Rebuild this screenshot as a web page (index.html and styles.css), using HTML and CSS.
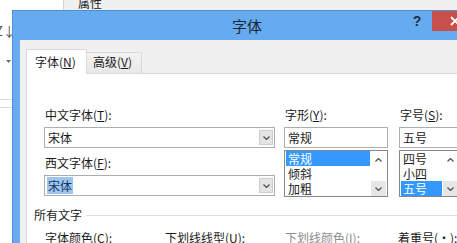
FILE: index.html
```html
<!DOCTYPE html>
<html lang="zh-CN">
<head>
  <meta charset="UTF-8">
  <title>字体</title>
  <link rel="stylesheet" href="styles.css">
</head>
<body>

  <!-- strip of the window behind -->
  <div class="topbar">
    <div class="topbar-left"></div>
    <div class="topbar-right"><span class="prop-title">属性</span></div>
  </div>

  <div class="screen">
    <div class="side">
      <span class="sort-glyph">Z↓</span>
      <svg class="side-arrow" width="5" height="3" viewBox="0 0 5 3"><path d="M0 0H5L2.5 3Z" fill="#6d6d6d"/></svg>
      <div class="side-line first"></div>
      <div class="side-line"></div>
    </div>

    <!-- Font dialog -->
    <div class="dialog">
      <div class="titlebar">
        <div></div>
        <div class="title">字体</div>
        <div class="title-buttons">
          <span class="help">?</span>
          <span class="close">
            <svg width="10" height="10" viewBox="0 0 10 10"><path d="M1 1L9 9M9 1L1 9" stroke="#fff" stroke-width="1.8"/></svg>
          </span>
        </div>
      </div>

      <div class="client">
        <div class="tabs">
          <div class="tab active">字体(<u>N</u>)</div>
          <div class="tab">高级(<u>V</u>)</div>
        </div>

        <div class="panel">
          <div class="font-row">
            <div class="col col-face">
              <label class="field-label">中文字体(<u>T</u>):</label>
              <div class="combo">
                <span class="value">宋体</span>
                <span class="drop-btn"><svg width="7" height="4" viewBox="0 0 7 4"><path d="M0.5 0.5L3.5 3.5L6.5 0.5" fill="none" stroke="#555" stroke-width="1.3"/></svg></span>
              </div>
              <label class="field-label second">西文字体(<u>F</u>):</label>
              <div class="combo">
                <span class="value"><span class="picked">宋体</span></span>
                <span class="drop-btn"><svg width="7" height="4" viewBox="0 0 7 4"><path d="M0.5 0.5L3.5 3.5L6.5 0.5" fill="none" stroke="#555" stroke-width="1.3"/></svg></span>
              </div>
            </div>

            <div class="col col-style">
              <label class="field-label">字形(<u>Y</u>):</label>
              <div class="text-box">常规</div>
              <div class="listbox">
                <div class="items">
                  <div class="item selected">常规</div>
                  <div class="item">倾斜</div>
                  <div class="item">加粗</div>
                </div>
                <div class="scroll">
                  <span class="scroll-up"><svg width="7" height="4" viewBox="0 0 7 4"><path d="M0.5 3.5L3.5 0.5L6.5 3.5" fill="none" stroke="#555" stroke-width="1.3"/></svg></span>
                  <span class="scroll-down"><svg width="7" height="4" viewBox="0 0 7 4"><path d="M0.5 0.5L3.5 3.5L6.5 0.5" fill="none" stroke="#555" stroke-width="1.3"/></svg></span>
                </div>
              </div>
            </div>

            <div class="col col-size">
              <label class="field-label">字号(<u>S</u>):</label>
              <div class="text-box">五号</div>
              <div class="listbox">
                <div class="items">
                  <div class="item">四号</div>
                  <div class="item">小四</div>
                  <div class="item selected">五号</div>
                </div>
                <div class="scroll">
                  <span class="scroll-up"><svg width="7" height="4" viewBox="0 0 7 4"><path d="M0.5 3.5L3.5 0.5L6.5 3.5" fill="none" stroke="#555" stroke-width="1.3"/></svg></span>
                  <span class="scroll-down"><svg width="7" height="4" viewBox="0 0 7 4"><path d="M0.5 0.5L3.5 3.5L6.5 0.5" fill="none" stroke="#555" stroke-width="1.3"/></svg></span>
                </div>
              </div>
            </div>
          </div>

          <div class="group-head">
            <span>所有文字</span>
            <div class="rule"></div>
          </div>

          <div class="effect-row">
            <span>字体颜色(<u>C</u>):</span>
            <span>下划线线型(<u>U</u>):</span>
            <span class="disabled">下划线颜色(<u>I</u>):</span>
            <span>着重号(·):</span>
          </div>
        </div>
      </div>
    </div>
  </div>

</body>
</html>
```

FILE: styles.css
```css
* {
  box-sizing: border-box;
}
body {
  margin: 0;
  width: 457px;
  height: 243px;
  overflow: hidden;
  background: #fff;
  font-family: "Noto Sans CJK SC", "Noto Sans", sans-serif;
  font-size: 12px;
  line-height: 14px;
  color: #1a1a1a;
}
u {
  text-underline-offset: 1px;
}

/* window behind */
.topbar {
  display: flex;
  height: 10px;
  overflow: hidden;
}
.topbar-left {
  width: 64px;
  border-right: 1px solid #d4d4d4;
}
.topbar-right {
  flex: 1;
  background: #f0f0f0;
  padding-left: 14px;
}
.prop-title {
  display: block;
  margin-top: -4px;
  color: #222;
}
.screen {
  display: flex;
  height: 233px;
}
.side {
  width: 12px;
  flex: none;
  display: flex;
  flex-direction: column;
  overflow: hidden;
}
.sort-glyph {
  margin-top: 14px;
  margin-left: -5px;
  font-size: 13px;
  line-height: 14px;
  color: #555;
  white-space: nowrap;
}
.side-arrow {
  margin-top: 22px;
  margin-left: 6px;
}
.side-line {
  height: 1px;
  background: #dadada;
  margin-top: 7px;
}
.side-line.first {
  margin-top: 36px;
}

/* dialog frame */
.dialog {
  flex: none;
  width: 470px;
  background: #66aaf0;
  border: 1px solid #4f8fd6;
  border-bottom: none;
  display: flex;
  flex-direction: column;
}
.titlebar {
  height: 29px;
  flex: none;
  display: grid;
  grid-template-columns: 1fr auto 1fr;
}
.title {
  align-self: center;
  font-size: 15px;
  line-height: 18px;
  color: #1d2733;
}
.title-buttons {
  display: flex;
  justify-content: flex-end;
  gap: 3px;
  margin-right: 4px;
}
.help {
  width: 24px;
  height: 20px;
  text-align: center;
  font-family: "Liberation Sans", sans-serif;
  font-weight: bold;
  font-size: 14px;
  line-height: 20px;
  color: #1c2e4a;
}
.close {
  width: 45px;
  height: 20px;
  background: #c7504b;
  display: flex;
  align-items: center;
  justify-content: center;
}
.client {
  flex: 1;
  margin: 0 7px;
  background: #f0f0f0;
  padding: 9px 0 0 6px;
  display: flex;
  flex-direction: column;
}

/* tabs */
.tabs {
  display: flex;
  align-items: flex-end;
  height: 25px;
  margin-bottom: -1px;
  position: relative;
  z-index: 1;
}
.tab {
  width: 55px;
  height: 21px;
  margin-bottom: 1px;
  padding: 2px 0 0 6px;
  border: 1px solid #d9d9d9;
  border-left: none;
  border-bottom: none;
  background: linear-gradient(#f2f2f2, #e8e8e8);
  white-space: nowrap;
}
.tab.active {
  width: 61px;
  height: 25px;
  margin-bottom: 0;
  padding: 5px 0 0 8px;
  border-left: 1px solid #d9d9d9;
  background: #fff;
}
.panel {
  flex: 1;
  margin-right: 6px;
  background: #fff;
  border: 1px solid #d9d9d9;
  padding: 34px 0 0 17px;
}

/* font fields */
.font-row {
  display: flex;
}
.col-face {
  width: 231px;
  margin-right: 9px;
}
.col-style {
  width: 104px;
  margin-right: 11px;
}
.col-size {
  width: 61px;
  flex: none;
}
.field-label {
  display: block;
  height: 14px;
  padding-left: 1px;
  margin-bottom: 5px;
  white-space: nowrap;
}
.field-label.second {
  margin-top: 8px;
}
.combo {
  height: 21px;
  border: 1px solid #abadb3;
  display: flex;
  align-items: center;
  padding: 0 1px 0 3px;
}
.combo .value {
  flex: 1;
}
.picked {
  background: #9cc6f0;
  color: #14365e;
  padding: 0 1px;
  margin-left: -1px;
}
.drop-btn {
  width: 14px;
  height: 15px;
  background: #e4e4e4;
  border: 1px solid #cdcdcd;
  display: flex;
  align-items: center;
  justify-content: center;
}
.text-box {
  height: 21px;
  border: 1px solid #abadb3;
  padding: 3px 0 0 3px;
}
.listbox {
  height: 47px;
  margin-top: 2px;
  border: 1px solid #828790;
  display: flex;
}
.items {
  flex: 1;
  margin-left: 1px;
}
.item {
  height: 15px;
  line-height: 15px;
  padding-left: 2px;
}
.item.selected {
  background: #3399ff;
  color: #fff;
}
.scroll {
  width: 17px;
  display: flex;
  flex-direction: column;
  justify-content: space-between;
}
.scroll-up,
.scroll-down {
  height: 15px;
  display: flex;
  align-items: center;
  justify-content: center;
}
.scroll-up {
  padding-top: 2px;
}
.scroll-down {
  width: 15px;
  margin-left: 1px;
  background: #e6e6e6;
}

/* all text group */
.group-head {
  display: flex;
  align-items: center;
  gap: 4px;
  margin: 11px 0 0 -10px;
}
.rule {
  flex: 1;
  height: 1px;
  background: #d8e0e6;
}
.effect-row {
  display: grid;
  grid-template-columns: 120px 120px 113px 1fr;
  margin-top: 9px;
  padding-left: 1px;
  white-space: nowrap;
}
.disabled {
  color: #8d8d8d;
}
```
